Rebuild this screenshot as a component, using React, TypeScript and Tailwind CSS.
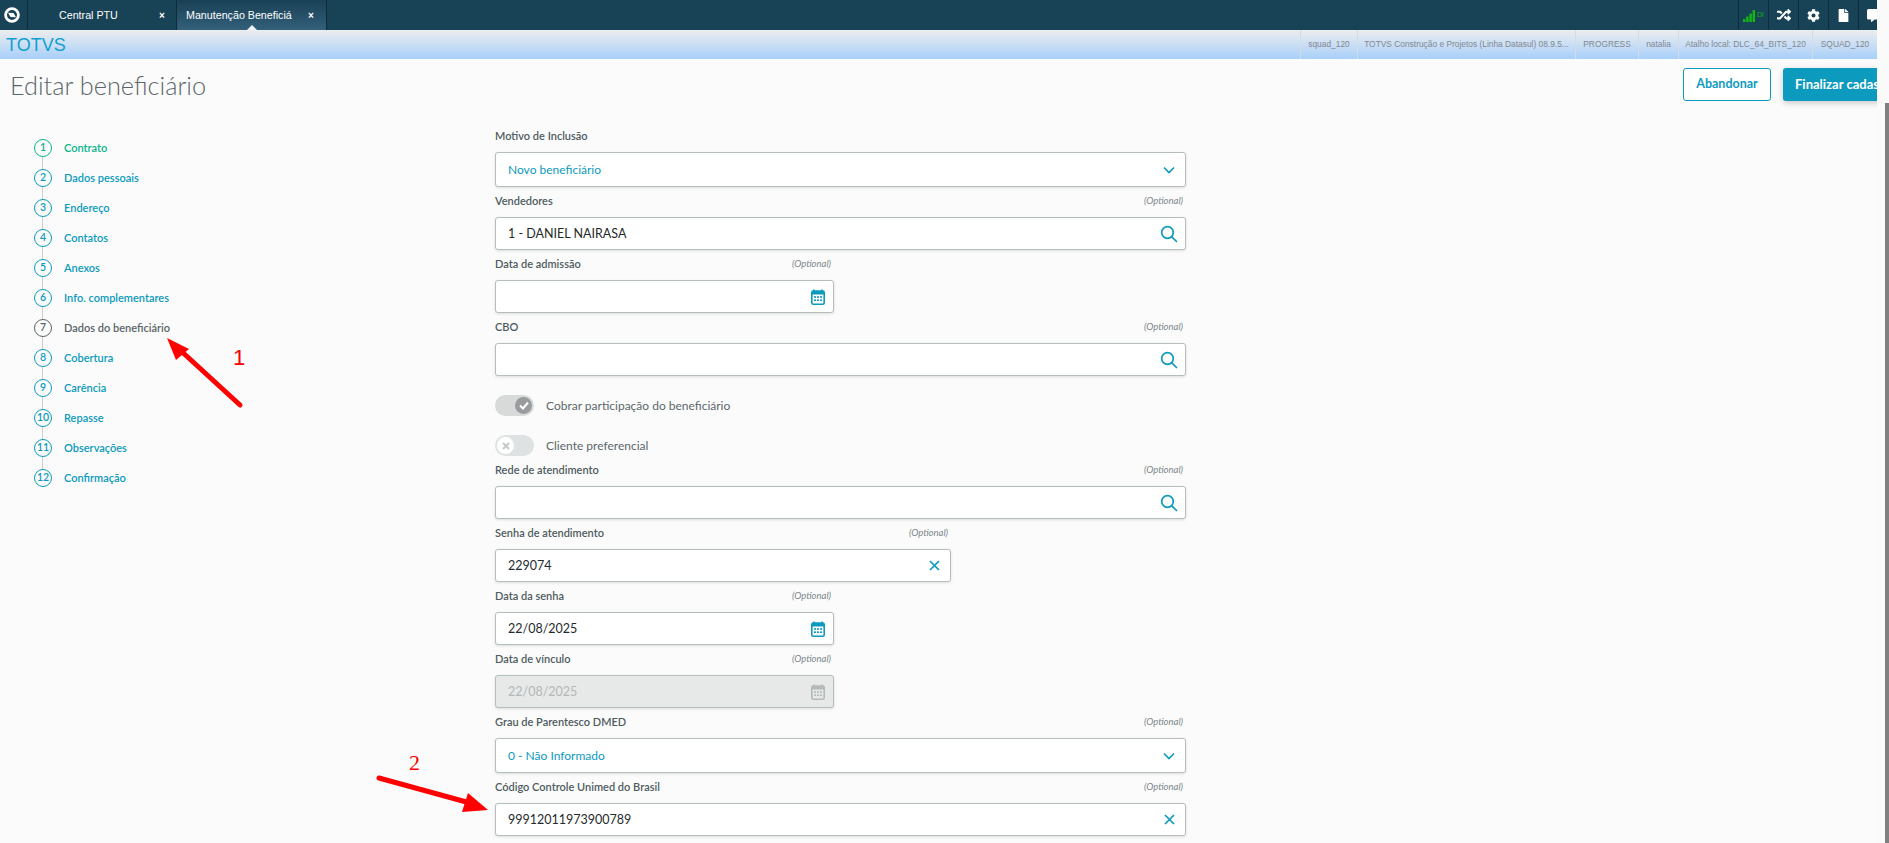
import React from 'react';
import { FaRandom, FaCog, FaFile, FaCommentAlt } from 'react-icons/fa';

const steps = [
  'Contrato',
  'Dados pessoais',
  'Endereço',
  'Contatos',
  'Anexos',
  'Info. complementares',
  'Dados do beneficiário',
  'Cobertura',
  'Carência',
  'Repasse',
  'Observações',
  'Confirmação',
];

const sessionInfo = [
  { text: 'squad_120', w: 'w-[57px]' },
  { text: 'TOTVS Construção e Projetos (Linha Datasul) 08.9.5...', w: 'w-[218px]' },
  { text: 'PROGRESS', w: 'w-[63px]' },
  { text: 'natalia', w: 'w-[40px]' },
  { text: 'Atalho local: DLC_64_BITS_120', w: 'w-[134px]' },
  { text: 'SQUAD_120', w: 'w-[65px]' },
];

const SearchIcon = () => (
  <svg width="18" height="18" viewBox="0 0 18 18" fill="none" stroke="#0c9abe" strokeWidth="1.7">
    <circle cx="7.5" cy="7.5" r="5.8" />
    <path d="M11.8 11.8 16.5 16.5" strokeLinecap="round" />
  </svg>
);

const ChevronIcon = () => (
  <svg width="12" height="8" viewBox="0 0 12 8" fill="none" stroke="#0c9abe" strokeWidth="1.7">
    <path d="M1 1.5 6 6.5 11 1.5" />
  </svg>
);

const ClearIcon = () => (
  <svg width="11" height="11" viewBox="0 0 11 11" fill="none" stroke="#0c9abe" strokeWidth="1.7">
    <path d="M1 1 10 10M10 1 1 10" />
  </svg>
);

const CalendarIcon = ({ color = '#0c9abe' }: { color?: string }) => (
  <svg width="14" height="16" viewBox="0 0 14 16" fill="none">
    <path d="M3 0.5V3M11 0.5V3" stroke={color} strokeWidth="1.6" />
    <rect x="0.8" y="2" width="12.4" height="13.2" rx="1.5" stroke={color} strokeWidth="1.6" />
    <rect x="1" y="2" width="12" height="3.5" fill={color} />
    <g fill={color}>
      <rect x="3" y="7.2" width="2" height="1.6" />
      <rect x="6" y="7.2" width="2" height="1.6" />
      <rect x="9" y="7.2" width="2" height="1.6" />
      <rect x="3" y="10.4" width="2" height="1.6" />
      <rect x="6" y="10.4" width="2" height="1.6" />
      <rect x="9" y="10.4" width="2" height="1.6" />
    </g>
  </svg>
);

const fieldIcons = {
  search: <SearchIcon />,
  clear: <ClearIcon />,
  calendar: <CalendarIcon />,
  chevron: <ChevronIcon />,
  disabledCalendar: <CalendarIcon color="#b4baba" />,
};

type FieldProps = {
  label: string;
  value?: string;
  optional?: boolean;
  icon: keyof typeof fieldIcons;
  width?: string;
  select?: boolean;
  disabled?: boolean;
};

function Field({ label, value, optional = true, icon, width = 'w-[691px]', select, disabled }: FieldProps) {
  const valueColor = select ? 'text-[#0c9abe] text-[12px]' : disabled ? 'text-[#b2b7b7] text-[12.5px]' : 'text-[#1f2a2c] text-[12.5px]';
  return (
    <div className={width}>
      <div className="flex items-center justify-between h-[28px] mb-[2px] pr-[3px] pt-[1px]">
        <span className="text-[11px] font-semibold text-[#4f5c5f]">{label}</span>
        {optional && <span className="text-[9.5px] italic text-[#7b878a]">(Optional)</span>}
      </div>
      <div
        className={`flex items-center justify-between border border-[#b6bdbd] rounded-[3px] pl-[12px] shadow-[0_1px_3px_rgba(0,0,0,0.12)] ${
          select ? 'h-[35px]' : 'h-[33px]'
        } ${disabled ? 'bg-[#e7e9e9]' : 'bg-white'} ${icon === 'search' ? 'pr-[7px]' : icon === 'calendar' || icon === 'disabledCalendar' ? 'pr-[8px]' : 'pr-[10px]'}`}
      >
        <span className={`pt-[1px] ${valueColor}`}>{value}</span>
        {fieldIcons[icon]}
      </div>
    </div>
  );
}

function Toggle({ on, label }: { on: boolean; label: string }) {
  return (
    <div className="flex items-center gap-[12px] mt-[19px] h-[21px]">
      <div
        className={`w-[39px] h-[21px] rounded-full flex items-center px-[2px] ${
          on ? 'bg-[#d8d9d9] justify-end' : 'bg-[#dfe2e2] justify-start'
        }`}
      >
        <div
          className={`w-[17px] h-[17px] rounded-full flex items-center justify-center ${
            on ? 'bg-[#989c9e]' : 'bg-white'
          }`}
        >
          {on ? (
            <svg width="10" height="9" viewBox="0 0 10 9" fill="none" stroke="#fff" strokeWidth="2">
              <path d="M1 4.5 4 7.5 9 1.5" />
            </svg>
          ) : (
            <svg width="8" height="8" viewBox="0 0 8 8" fill="none" stroke="#c3c8c9" strokeWidth="2">
              <path d="M1 1 7 7M7 1 1 7" />
            </svg>
          )}
        </div>
      </div>
      <span className="text-[12px] text-[#5c686b]">{label}</span>
    </div>
  );
}

function Step({ n, label }: { n: number; label: string }) {
  const current = n === 7;
  const tone = n === 1 ? 'text-[#0ab58d] border-[#0ab58d]' : current ? 'text-[#5a6569] border-[#5a6569]' : 'text-[#0c9abe] border-[#0c9abe]';
  return (
    <div className="relative flex items-center h-[30px]">
      {n < 12 && <div className="absolute left-[8px] top-[24px] h-[12px] w-px bg-[#c9cfd0]" />}
      <div className={`w-[18px] h-[18px] rounded-full border flex items-center justify-center text-[10.5px] font-semibold ${tone}`}>
        {n}
      </div>
      <span className={`ml-[12px] text-[11px] font-semibold ${tone}`}>{label}</span>
    </div>
  );
}

export default function App() {
  return (
    <div className="relative flex h-screen overflow-hidden bg-white font-['Lato',sans-serif]">
      <div className="flex flex-col w-[1877px] shrink-0 overflow-hidden">
        {/* top bar with tabs */}
        <div className="flex h-[30px] shrink-0 bg-[#184256] font-['Liberation_Sans',sans-serif] text-[10.7px] text-white">
          <div className="flex w-[1738px] shrink-0">
            <div className="w-[28px] flex items-center justify-center border-r border-[#0e2c3b] pr-[3px]">
              <svg width="18" height="18" viewBox="0 0 18 18" fill="none">
                <circle cx="9" cy="9" r="6.4" stroke="#fff" strokeWidth="2.8" />
                <path d="M5 6.8 10.5 7 13 11.2 7.5 11Z" fill="#fff" />
              </svg>
            </div>
            <div className="w-[149px] flex items-center border-r border-[#0e2c3b] pl-[31px]">
              <span className="w-[100px]">Central PTU</span>
              <span className="text-[10px] font-bold">×</span>
            </div>
            <div className="relative w-[150px] flex items-center border-r border-[#0e2c3b] pl-[9px] bg-gradient-to-b from-[#194055] to-[#33607a]">
              <span className="w-[122px]">Manutenção Beneficiá</span>
              <span className="text-[10px] font-bold">×</span>
              <div className="absolute left-[70px] bottom-0 w-0 h-0 border-x-[5px] border-x-transparent border-b-[5px] border-b-[#eef0f2]" />
            </div>
          </div>
          <div className="flex">
            <div className="w-[30px] shrink-0 flex items-center justify-center gap-[2px] border-l border-[#0e2c3b] pt-[1px]">
              <svg width="12" height="12" viewBox="0 0 12 12" fill="#14b814">
                <rect x="0" y="9" width="2.4" height="3" />
                <rect x="3.2" y="6.5" width="2.4" height="5.5" />
                <rect x="6.4" y="3.5" width="2.4" height="8.5" />
                <rect x="9.6" y="0" width="2.4" height="12" />
              </svg>
              <span className="text-[7px] text-[#14b814]">DI</span>
            </div>
            <div className="w-[30px] shrink-0 flex items-center justify-center border-l border-[#0e2c3b]">
              <FaRandom size={14} color="#fff" />
            </div>
            <div className="w-[30px] shrink-0 flex items-center justify-center border-l border-[#0e2c3b]">
              <FaCog size={13} color="#fff" />
            </div>
            <div className="w-[30px] shrink-0 flex items-center justify-center border-l border-[#0e2c3b]">
              <FaFile size={13} color="#fff" />
            </div>
            <div className="w-[30px] shrink-0 flex items-center justify-center border-l border-[#0e2c3b]">
              <FaCommentAlt size={13} color="#fff" />
            </div>
          </div>
        </div>

        {/* session info */}
        <div className="flex items-center justify-between h-[29px] shrink-0 bg-gradient-to-b from-[#ecedee] to-[#a8cffa] font-['Liberation_Sans',sans-serif]">
          <span className="ml-[6px] text-[18px] leading-none text-[#0e9fcf]">TOTVS</span>
          <div className="flex h-full">
            {sessionInfo.map((item) => (
              <div
                key={item.text}
                className={`flex items-center justify-center border-l border-[#d5dbe2] text-[8.4px] whitespace-nowrap text-[#7f8890] ${item.w}`}
              >
                {item.text}
              </div>
            ))}
          </div>
        </div>

        {/* page */}
        <div className="flex-1 bg-[#fbfbfb] overflow-hidden">
          <div className="flex h-[63px] overflow-hidden">
            <div className="w-[1683px] shrink-0 pl-[10px] pt-[10px] text-[25.3px] font-light leading-[32px] text-[#5b666a]">
              Editar beneficiário
            </div>
            <div className="flex gap-[12px] pt-[9px] shrink-0">
              <div className="w-[88px] h-[33px] flex items-center justify-center rounded-[3px] border border-[#0c9abe] bg-white text-[12.5px] font-bold text-[#0c9abe]">
                Abandonar
              </div>
              <div className="w-[140px] h-[33px] flex items-center pl-[12px] rounded-[3px] bg-[#0c9abe] text-[13px] font-bold text-white shadow-[0_2px_6px_rgba(0,0,0,0.2)]">
                Finalizar cadastro
              </div>
            </div>
          </div>
          <div className="flex">
            <div className="w-[495px] shrink-0 pl-[34px] pt-[11px]">
              {steps.map((label, i) => (
                <Step key={label} n={i + 1} label={label} />
              ))}
            </div>
            <div className="w-[691px]">
              <Field label="Motivo de Inclusão" value="Novo beneficiário" optional={false} icon="chevron" select />
              <Field label="Vendedores" value="1 - DANIEL NAIRASA" icon="search" />
              <Field label="Data de admissão" icon="calendar" width="w-[339px]" />
              <Field label="CBO" icon="search" />
              <Toggle on label="Cobrar participação do beneficiário" />
              <Toggle on={false} label="Cliente preferencial" />
              <Field label="Rede de atendimento" icon="search" />
              <Field label="Senha de atendimento" value="229074" icon="clear" width="w-[456px]" />
              <Field label="Data da senha" value="22/08/2025" icon="calendar" width="w-[339px]" />
              <Field label="Data de vínculo" value="22/08/2025" icon="disabledCalendar" width="w-[339px]" disabled />
              <Field label="Grau de Parentesco DMED" value="0 - Não Informado" icon="chevron" select />
              <Field label="Código Controle Unimed do Brasil" value="99912011973900789" icon="clear" />
            </div>
          </div>
        </div>
      </div>

      {/* scrollbar */}
      <div className="relative flex-1 bg-[#fafafa]">
        <div className="absolute right-0 top-[103px] h-[740px] w-[4px] bg-[#808080]" />
      </div>

      {/* red annotations drawn over the screenshot */}
      <svg className="absolute left-0 top-0 pointer-events-none" width="1889" height="843" fill="#fe0000">
        <path d="M240 405 180 350" stroke="#fe0000" strokeWidth="5" strokeLinecap="round" />
        <path d="M167 338 189 349 176 360Z" />
        <path d="M379 778 470 803" stroke="#fe0000" strokeWidth="5" strokeLinecap="round" />
        <path d="M488 810 462 812 468 793Z" />
      </svg>
      <span className="absolute left-[233px] top-[343px] text-[22px] leading-[30px] text-[#fe0000] font-['Liberation_Sans',sans-serif] font-light">1</span>
      <span className="absolute left-[409px] top-[748px] text-[22px] leading-[30px] text-[#fe0000] font-['Liberation_Serif',serif]">2</span>
    </div>
  );
}
